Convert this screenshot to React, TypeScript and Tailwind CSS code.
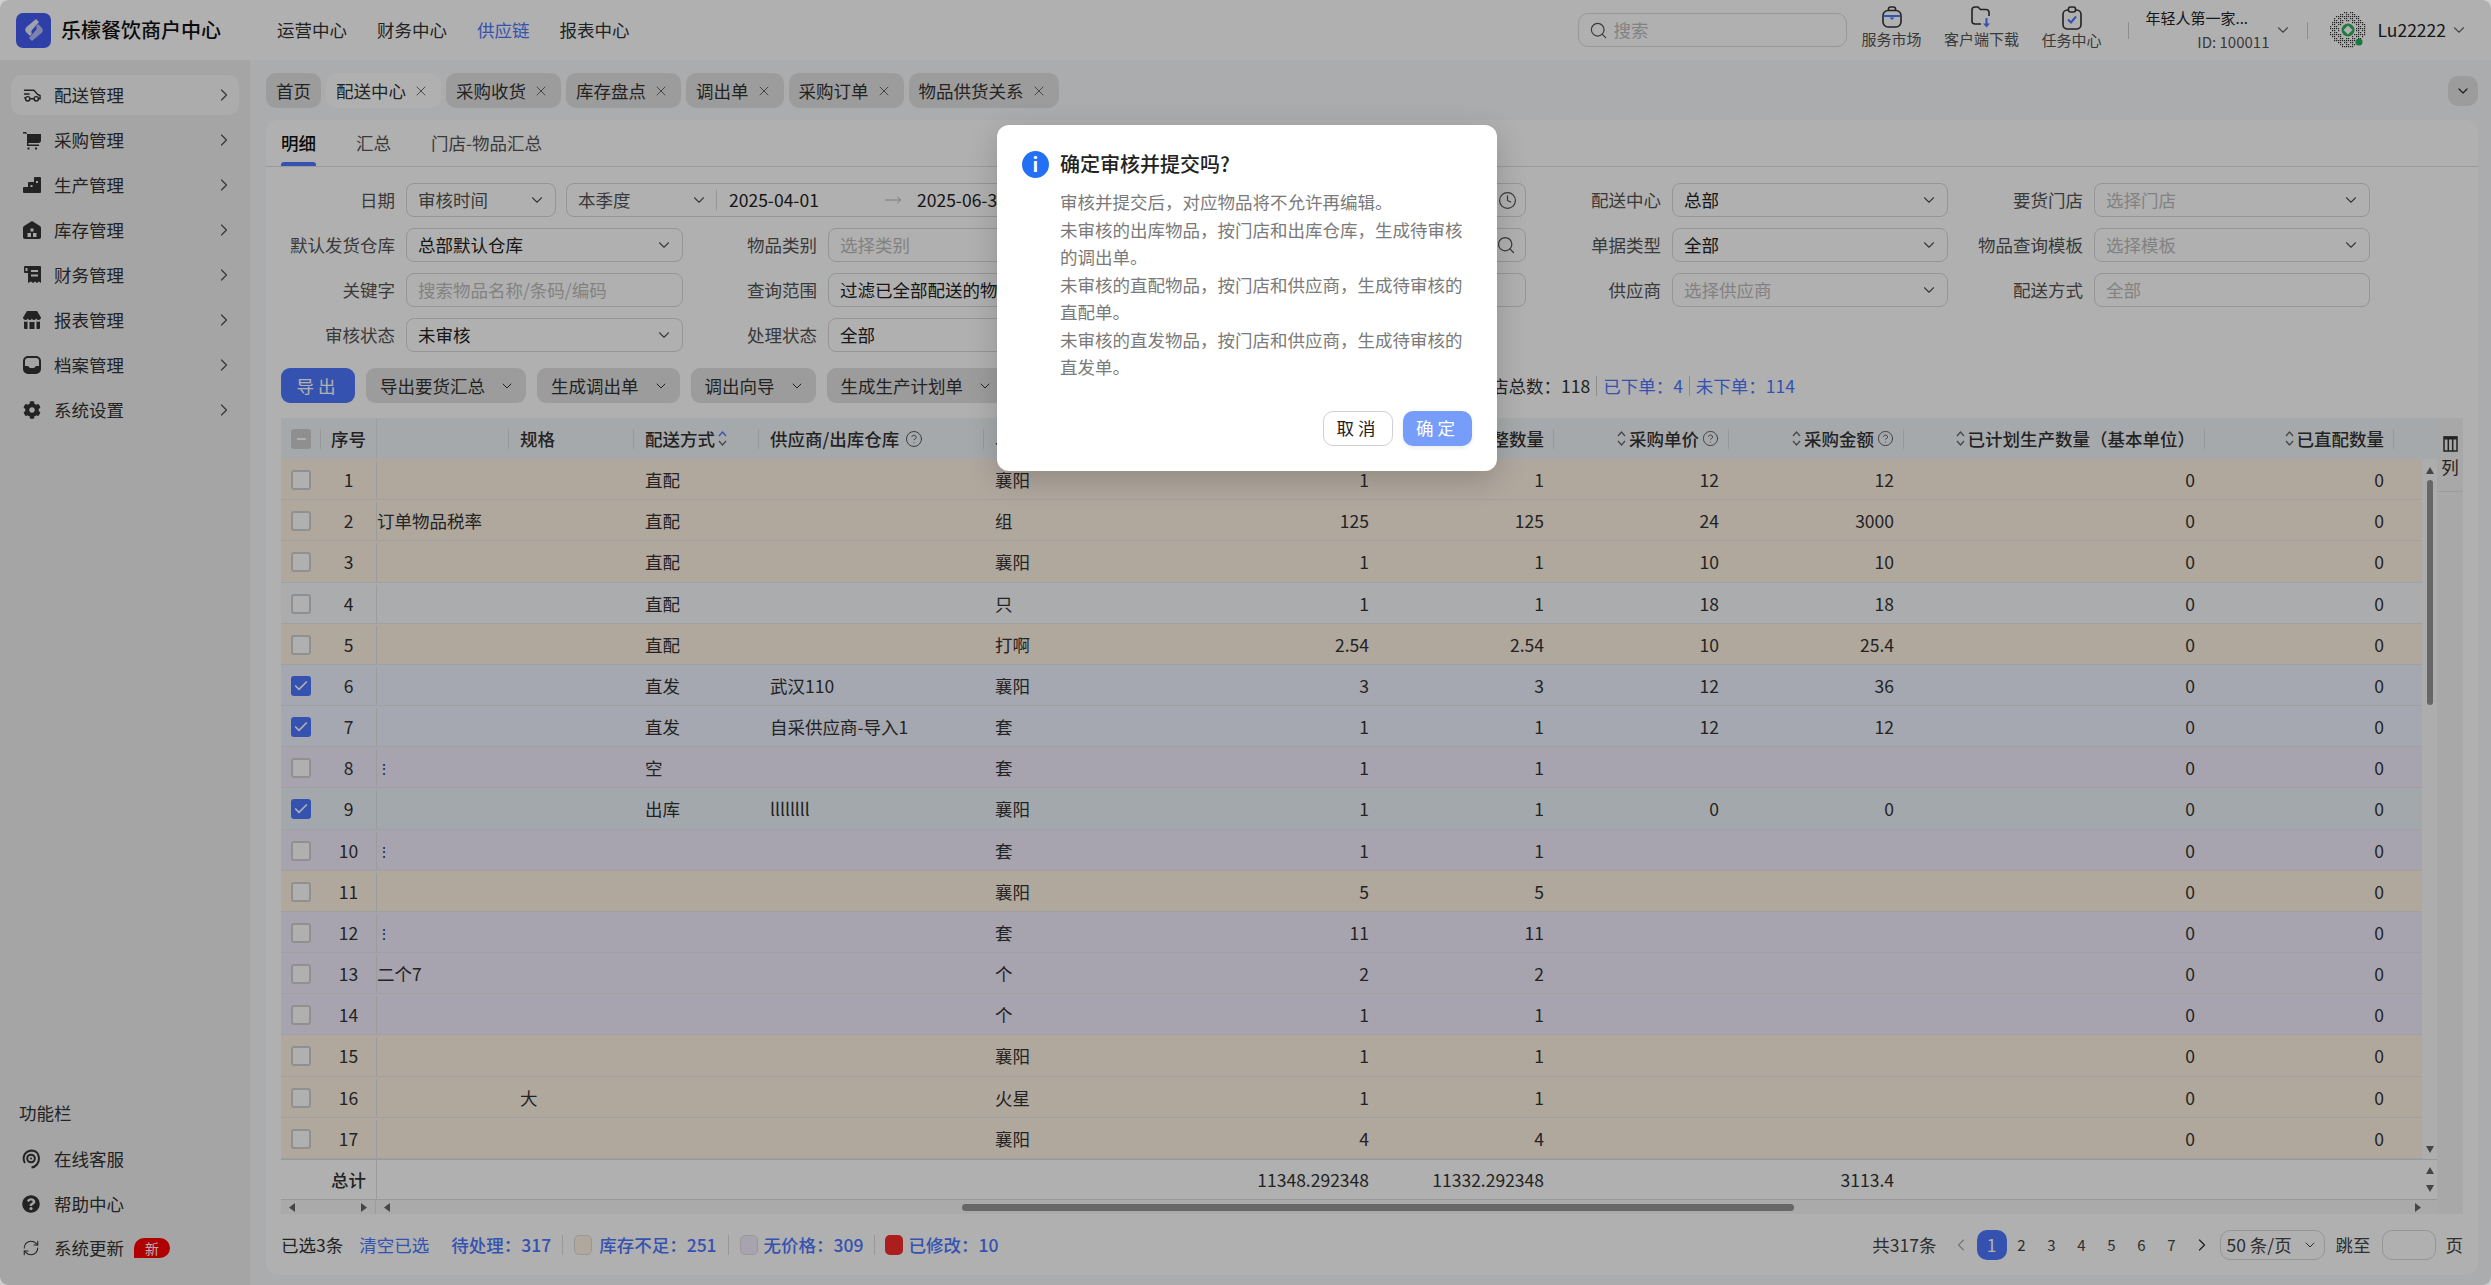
import { ChevronDown, ChevronRight, ChevronLeft, X, Search, Clock, CircleHelp, MoveRight, RefreshCw, Check } from 'lucide-react'
import { FaCog, FaQuestionCircle } from 'react-icons/fa'
import type { ReactNode } from 'react'

const GRID = 'grid grid-cols-[40px_55px_133px_125px_125px_225px_125px_270px_175px_175px_175px_301px_189px_1fr]'

type Row = {
  n: number
  tone: 'o' | 'w' | 'b' | 'p' | 'g'
  name?: string
  spec?: string
  way: string
  sup?: string
  unit: string
  a: string
  b: string
  p?: string
  m?: string
  checked?: boolean
}

const rows: Row[] = [
  { n: 1, tone: 'o', way: '直配', unit: '襄阳', a: '1', b: '1', p: '12', m: '12' },
  { n: 2, tone: 'o', name: '订单物品税率', way: '直配', unit: '组', a: '125', b: '125', p: '24', m: '3000' },
  { n: 3, tone: 'o', way: '直配', unit: '襄阳', a: '1', b: '1', p: '10', m: '10' },
  { n: 4, tone: 'w', way: '直配', unit: '只', a: '1', b: '1', p: '18', m: '18' },
  { n: 5, tone: 'o', way: '直配', unit: '打啊', a: '2.54', b: '2.54', p: '10', m: '25.4' },
  { n: 6, tone: 'b', way: '直发', sup: '武汉110', unit: '襄阳', a: '3', b: '3', p: '12', m: '36', checked: true },
  { n: 7, tone: 'b', way: '直发', sup: '自采供应商-导入1', unit: '套', a: '1', b: '1', p: '12', m: '12', checked: true },
  { n: 8, tone: 'p', name: '⋮', way: '空', unit: '套', a: '1', b: '1' },
  { n: 9, tone: 'g', way: '出库', sup: 'llllllll', unit: '襄阳', a: '1', b: '1', p: '0', m: '0', checked: true },
  { n: 10, tone: 'p', name: '⋮', way: '', unit: '套', a: '1', b: '1' },
  { n: 11, tone: 'o', way: '', unit: '襄阳', a: '5', b: '5' },
  { n: 12, tone: 'p', name: '⋮', way: '', unit: '套', a: '11', b: '11' },
  { n: 13, tone: 'p', name: '二个7', way: '', unit: '个', a: '2', b: '2' },
  { n: 14, tone: 'p', way: '', unit: '个', a: '1', b: '1' },
  { n: 15, tone: 'o', way: '', unit: '襄阳', a: '1', b: '1' },
  { n: 16, tone: 'o', spec: '大', way: '', unit: '火星', a: '1', b: '1' },
  { n: 17, tone: 'o', way: '', unit: '襄阳', a: '4', b: '4' },
]

const toneClass: Record<Row['tone'], string> = {
  o: 'bg-[#fff2e4]',
  w: 'bg-[#f8f9fb]',
  b: 'bg-[#eff4ff]',
  p: 'bg-[#f2eeff]',
  g: 'bg-[#edf3fa]',
}

function CarIcon() {
  return (
    <svg width="19" height="18" viewBox="0 0 19 18" fill="none" stroke="currentColor" strokeWidth="1.5">
      <path d="M1 4h10.5l4 4.5 2.5 1V13h-2" />
      <path d="M1 8h6M1 12h1.5" />
      <circle cx="5" cy="13" r="2.3" />
      <circle cx="14" cy="13" r="2.3" />
      <path d="M7.5 13h4" />
    </svg>
  )
}

function CartIcon() {
  return (
    <svg width="18" height="19" viewBox="0 0 18 19" fill="currentColor">
      <path d="M0 1h3l1 1.4V3h14v6.5c0 1.6-1 2.5-2.5 2.5H5.4v1.6H16V15H4V3L2.400 2.400H0z" />
      <rect x="4.500" y="16.500" width="2" height="2" />
      <rect x="12" y="16.500" width="2" height="2" />
    </svg>
  )
}

function StepsIcon() {
  return (
    <svg width="18" height="18" viewBox="0 0 18 18" fill="currentColor">
      <path d="M12 1h5a1 1 0 0 1 1 1v14a1 1 0 0 1-1 1H1a1 1 0 0 1-1-1v-4a1 1 0 0 1 1-1h4V7a1 1 0 0 1 1-1h5V2a1 1 0 0 1 1-1z" />
      <rect x="13" y="5" width="2" height="2" fill="#efefef" />
      <rect x="7.500" y="9" width="2" height="2" fill="#efefef" />
    </svg>
  )
}

function WarehouseIcon() {
  return (
    <svg width="18" height="18" viewBox="0 0 18 18" fill="currentColor">
      <path d="M9 0l8 5c.6.400 1 1 1 1.800V16a2 2 0 0 1-2 2H2a2 2 0 0 1-2-2V6.800C0 6 .4 5.400 1 5z" />
      <rect x="7.500" y="7.500" width="3" height="3" fill="#efefef" />
      <rect x="4.500" y="12" width="3.500" height="4" fill="#efefef" />
      <rect x="10" y="12" width="3.500" height="4" fill="#efefef" />
    </svg>
  )
}

function ReceiptIcon() {
  return (
    <svg width="17" height="18" viewBox="0 0 17 18" fill="currentColor">
      <path d="M1 0h15a1 1 0 0 1 1 1v16l-2-1.500L13 17l-2-1.500L9 17l-2-1.500L4 17V7H1a1 1 0 0 1-1-1V1a1 1 0 0 1 1-1z" />
      <rect x="7" y="4" width="7" height="2" fill="#efefef" />
      <rect x="7" y="8.500" width="7" height="2" fill="#efefef" />
      <rect x="1.500" y="2" width="2" height="3" fill="#efefef" />
    </svg>
  )
}

function StoreIcon() {
  return (
    <svg width="18" height="18" viewBox="0 0 18 18" fill="currentColor">
      <path d="M4 0h10l4 6.500c0 1.500-1.200 2.500-2.500 2.500-1 0-2-.6-2.300-1.500-.4.900-1.300 1.500-2.300 1.500S9 8.400 9 7.500C8.700 8.400 7.700 9 6.800 9s-1.800-.6-2-1.500C4.400 8.400 3.500 9 2.500 9 1.200 9 0 8 0 6.500z" />
      <path d="M1 10.500c1.400.5 2.600.3 3.500-.3V18H2a1 1 0 0 1-1-1zM17 10.500c-1.400.5-2.600.3-3.500-.3V18H16a1 1 0 0 0 1-1zM6.500 11h5v7h-5z" />
    </svg>
  )
}

function InboxIcon() {
  return (
    <svg width="18" height="18" viewBox="0 0 18 18" fill="none">
      <rect x="1" y="1" width="16" height="16" rx="4" stroke="currentColor" strokeWidth="2" />
      <path d="M1 10h4l2 2h4l2-2h4v3a4 4 0 0 1-4 4H5a4 4 0 0 1-4-4z" fill="currentColor" />
    </svg>
  )
}

function ServiceIcon() {
  return (
    <svg width="18" height="20" viewBox="0 0 18 20" fill="none" stroke="currentColor" strokeWidth="2">
      <path d="M3 14C0.500 10 1 3 9 1.500c6.500 0 8 5 8 8 0 4.500-3 8.500-7.500 9" />
      <circle cx="9" cy="9.500" r="3.800" />
      <circle cx="9" cy="9.500" r="1" fill="currentColor" stroke="none" />
    </svg>
  )
}

function Logo() {
  return (
    <div className="flex h-[35px] w-[35px] items-center justify-center rounded-[7px] bg-[#435ef3]">
      <svg width="20" height="24" viewBox="0 0 20 24">
        <path d="M12 1l3 3-7 8c-1 1.200-1 2.500 0 3.500l-2 2.500L2 14c-1-1.500-1-3 0-4.500z" fill="#e8ebfd" />
        <path d="M8 23l-3-3 7-8c1-1.200 1-2.500 0-3.500l2-2.500L18 10c1 1.500 1 3 0 4.500z" fill="#b5c0f8" />
      </svg>
    </div>
  )
}

function BagIcon() {
  return (
    <svg width="20" height="22" viewBox="0 0 20 22" fill="none">
      <path d="M6.500 4.500V3a2 2 0 0 1 2-2h3a2 2 0 0 1 2 2v1.500" stroke="#333" strokeWidth="1.600" />
      <rect x="1" y="4.500" width="18" height="16.500" rx="5" stroke="#333" strokeWidth="1.600" />
      <path d="M1.500 10h17" stroke="#4d78ff" strokeWidth="2" />
      <path d="M7.500 11.500h5l-2.500 2.500z" fill="#4d78ff" />
    </svg>
  )
}

function FolderIcon() {
  return (
    <svg width="21" height="22" viewBox="0 0 21 22" fill="none">
      <path d="M10 18H4a3 3 0 0 1-3-3V4a3 3 0 0 1 3-3h3l2.500 2.500H15a3 3 0 0 1 3 3V10" stroke="#333" strokeWidth="1.600" />
      <path d="M15.500 12v7" stroke="#4d78ff" strokeWidth="2" />
      <path d="M12 17.500h7L15.500 21.500z" fill="#4d78ff" />
    </svg>
  )
}

function ClipIcon() {
  return (
    <svg width="20" height="24" viewBox="0 0 20 24" fill="none">
      <rect x="1" y="4" width="18" height="19" rx="4.500" stroke="#333" strokeWidth="1.600" />
      <rect x="6.500" y="1" width="7" height="5" rx="2" stroke="#333" strokeWidth="1.600" fill="#fff" />
      <path d="M6 13.500l3 3 5-6" stroke="#4d78ff" strokeWidth="2" />
    </svg>
  )
}

function QrAvatar() {
  const dots: ReactNode[] = []
  for (let y = 0; y < 18; y++) {
    for (let x = 0; x < 18; x++) {
      const dx = x - 8.5
      const dy = y - 8.5
      const r = Math.sqrt(dx * dx + dy * dy)
      if (r > 9 || r < 4.200) continue
      if ((x * 7 + y * 13 + x * y) % 3 === 0) continue
      dots.push(<rect key={`${x}-${y}`} x={x * 2} y={y * 2} width="1.200" height="1.200" fill="#333" />)
    }
  }
  return (
    <svg width="36" height="36" viewBox="0 0 36 36">
      {dots}
      <circle cx="18" cy="18" r="6.500" fill="#2fae58" />
      <path d="M18 13.500l4.500 4.500-4.500 4.500-4.500-4.500z" fill="#fff" />
      <circle cx="29" cy="30" r="3.500" fill="#1fb359" />
    </svg>
  )
}

function Sort({ active }: { active?: boolean }) {
  return (
    <svg width="9" height="17" viewBox="0 0 9 17" fill="none" strokeWidth="1.300" className="shrink-0">
      <path d="M1 6l3.500-4L8 6" stroke={active ? '#4d78ff' : '#666'} />
      <path d="M1 11l3.500 4L8 11" stroke="#666" />
    </svg>
  )
}

function Arrow({ dir }: { dir: 'up' | 'down' | 'left' | 'right' }) {
  const points = {
    up: '4,1 8,8 0,8',
    down: '0,1 8,1 4,8',
    left: '7,0 7,9 1,4.500',
    right: '1,0 1,9 7,4.500',
  }[dir]
  return (
    <svg width="8" height="9" viewBox="0 0 8 9" className="shrink-0">
      <polygon points={points} fill="#666" />
    </svg>
  )
}

function Label({ children }: { children: ReactNode }) {
  return <div className="flex h-[34px] items-center justify-end pr-[11px] text-[#555]">{children}</div>
}

function Field({ children, value, placeholder, w, noArrow, icon }: { children?: ReactNode; value?: string; placeholder?: string; w?: string; noArrow?: boolean; icon?: ReactNode }) {
  return (
    <div className={`flex h-[34px] items-center rounded-[8px] border border-[#d9d9d9] bg-white pl-[11px] pr-[9px] ${w ?? ''}`}>
      {children}
      {value && <span className="text-[#222]">{value}</span>}
      {placeholder && <span className="text-[#bdbdbd]">{placeholder}</span>}
      <span className="ml-auto flex text-[#555]">{icon ?? (noArrow ? null : <ChevronDown size={18} strokeWidth={1.5} />)}</span>
    </div>
  )
}

function TagButton({ label }: { label: string }) {
  return (
    <div className="flex h-[35px] items-center gap-[14px] rounded-[9px] bg-[#e3e3e3] pl-[14px] pr-[11px] text-[#333]">
      {label}
      <ChevronDown size={16} strokeWidth={1.5} />
    </div>
  )
}

function CheckBox({ checked, half }: { checked?: boolean; half?: boolean }) {
  if (checked) {
    return (
      <div className="flex h-[20px] w-[20px] items-center justify-center rounded-[3px] bg-[#4d78ff] text-white">
        <Check size={16} strokeWidth={2.5} />
      </div>
    )
  }
  if (half) {
    return (
      <div className="flex h-[20px] w-[20px] items-center justify-center rounded-[3px] bg-[#cfcfcf]">
        <div className="h-[2px] w-[9px] bg-white" />
      </div>
    )
  }
  return <div className="h-[20px] w-[20px] rounded-[3px] border-2 border-[#d1d1d1] bg-white" />
}

function HeadCell({ children, right, sep = true, pl }: { children?: ReactNode; right?: boolean; sep?: boolean; pl?: string }) {
  return (
    <div className={`relative flex items-center gap-[3px] whitespace-nowrap ${right ? 'justify-end pr-[10px]' : pl ?? 'pl-[11px]'}`}>
      {children}
      {sep && <span className="absolute right-0 top-[11px] h-[20px] w-px bg-[#dcdcdc]" />}
    </div>
  )
}

function Num({ children }: { children?: ReactNode }) {
  return <div className="flex items-center justify-end pr-[10px]">{children}</div>
}

function Cell({ children }: { children?: ReactNode }) {
  return <div className="flex items-center pl-[11px]">{children}</div>
}

const menu = [
  { label: '配送管理', icon: <CarIcon />, active: true },
  { label: '采购管理', icon: <CartIcon /> },
  { label: '生产管理', icon: <StepsIcon /> },
  { label: '库存管理', icon: <WarehouseIcon /> },
  { label: '财务管理', icon: <ReceiptIcon /> },
  { label: '报表管理', icon: <StoreIcon /> },
  { label: '档案管理', icon: <InboxIcon /> },
  { label: '系统设置', icon: <FaCog size={18} /> },
]

const tabs = ['配送中心', '采购收货', '库存盘点', '调出单', '采购订单', '物品供货关系']

function Sidebar() {
  return (
    <aside className="flex w-[250px] shrink-0 flex-col bg-[#efefef] px-[11px] pb-[17px] pt-[15px] text-[#333]">
      <div className="flex flex-col gap-[5px]">
        {menu.map(m => (
          <div key={m.label} className={`flex h-[40px] items-center rounded-[10px] pl-[12px] pr-[5px] ${m.active ? 'bg-[#fafafa]' : ''}`}>
            <span className="flex w-[18px] justify-center">{m.icon}</span>
            <span className="ml-[13px]">{m.label}</span>
            <ChevronRight size={20} strokeWidth={1.5} className="ml-auto text-[#555]" />
          </div>
        ))}
      </div>
      <div className="mt-auto">
        <div className="flex h-[20px] items-center pl-[8px]">功能栏</div>
        <div className="mt-[16px] flex h-[40px] items-center pl-[11px]">
          <span className="flex w-[18px] justify-center"><ServiceIcon /></span>
          <span className="ml-[14px]">在线客服</span>
        </div>
        <div className="mt-[5px] flex h-[40px] items-center pl-[11px]">
          <span className="flex w-[18px] justify-center"><FaQuestionCircle size={18} /></span>
          <span className="ml-[14px]">帮助中心</span>
        </div>
        <div className="mt-[4px] flex h-[40px] items-center pl-[11px]">
          <span className="flex w-[18px] justify-center"><RefreshCw size={18} strokeWidth={1.4} /></span>
          <span className="ml-[14px]">系统更新</span>
          <span className="ml-[10px] flex h-[20px] w-[36px] items-center justify-center rounded-[10px] rounded-bl-none bg-[#ff0000] text-[14px] text-white">新</span>
        </div>
      </div>
    </aside>
  )
}

function TopBar() {
  return (
    <header className="flex h-[60px] shrink-0 items-center bg-white pl-[16px] pr-[23px] text-[#222]">
      <Logo />
      <div className="ml-[10px] text-[20px] font-medium text-[#111]">乐檬餐饮商户中心</div>
      <nav className="ml-[56px] flex gap-[30px] text-[#333]">
        <span>运营中心</span>
        <span>财务中心</span>
        <span className="text-[#4d78ff]">供应链</span>
        <span>报表中心</span>
      </nav>
      <div className="ml-auto flex h-[34px] w-[269px] items-center rounded-[10px] border border-[#dcdcdc] pl-[10px] text-[#bdbdbd]">
        <Search size={19} strokeWidth={1.5} className="text-[#555]" />
        <span className="ml-[6px]">搜索</span>
      </div>
      <div className="mb-[5px] flex text-[15px] leading-[20px] text-[#555]">
        <div className="flex w-[90px] flex-col items-center"><BagIcon /><span className="mt-[1px]">服务市场</span></div>
        <div className="flex w-[90px] flex-col items-center"><FolderIcon /><span className="mt-[1px]">客户端下载</span></div>
        <div className="flex w-[90px] flex-col items-center"><ClipIcon /><span>任务中心</span></div>
      </div>
      <div className="ml-[11px] h-[17px] w-px bg-[#ccc]" />
      <div className="ml-[17px] flex w-[124px] flex-col items-end">
        <span className="self-start text-[15px] leading-[24px]">年轻人第一家...</span>
        <span className="text-[15px] leading-[24px] text-[#555]">ID: 100011</span>
      </div>
      <ChevronDown size={18} strokeWidth={1.5} className="ml-[4px] text-[#666]" />
      <div className="ml-[15px] h-[17px] w-px bg-[#ccc]" />
      <div className="ml-[22px]"><QrAvatar /></div>
      <span className="ml-[12px] text-[#222]">Lu22222</span>
      <ChevronDown size={18} strokeWidth={1.5} className="ml-[4px] text-[#666]" />
    </header>
  )
}

function TabBar() {
  return (
    <div className="flex h-[35px] items-center gap-[5px] text-[#333]">
      <div className="flex h-[35px] items-center rounded-[10px] bg-[#e3e3e3] px-[10px]">首页</div>
      {tabs.map((t, i) => (
        <div key={t} className={`flex h-[35px] items-center gap-[7px] rounded-[10px] pl-[10px] pr-[12px] ${i === 0 ? 'bg-white' : 'bg-[#e3e3e3]'}`}>
          {t}
          <X size={16} strokeWidth={1.3} className="text-[#555]" />
        </div>
      ))}
      <div className="ml-auto flex h-[30px] w-[30px] items-center justify-center rounded-[10px] bg-[#e3e3e3]">
        <ChevronDown size={16} strokeWidth={2} />
      </div>
    </div>
  )
}

function Filters() {
  return (
    <div className="mt-[16px] grid grid-cols-[140px_277px_145px_698px_146px_276px_146px_276px] gap-y-[11px]">
      <Label>日期</Label>
      <div className="col-span-3 flex gap-[10px]">
        <Field w="w-[150px]"><span className="text-[#555]">审核时间</span></Field>
        <div className="flex h-[34px] flex-1 items-center rounded-[8px] border border-[#d9d9d9] bg-white pl-[11px] pr-[8px]">
          <span className="w-[112px] text-[#555]">本季度</span>
          <ChevronDown size={18} strokeWidth={1.5} className="text-[#555]" />
          <span className="ml-[8px] h-[20px] w-px bg-[#d9d9d9]" />
          <span className="ml-[12px] w-[155px] text-[#222]">2025-04-01</span>
          <MoveRight size={18} strokeWidth={1} className="text-[#999]" />
          <span className="ml-[15px] text-[#222]">2025-06-30</span>
          <Clock size={19} strokeWidth={1.5} className="ml-auto text-[#555]" />
        </div>
      </div>
      <Label>配送中心</Label>
      <Field value="总部" />
      <Label>要货门店</Label>
      <Field placeholder="选择门店" />

      <Label>默认发货仓库</Label>
      <Field value="总部默认仓库" />
      <Label>物品类别</Label>
      <Field placeholder="选择类别" icon={<Search size={20} strokeWidth={1.5} />} />
      <Label>单据类型</Label>
      <Field value="全部" />
      <Label>物品查询模板</Label>
      <Field placeholder="选择模板" />

      <Label>关键字</Label>
      <Field placeholder="搜索物品名称/条码/编码" noArrow />
      <Label>查询范围</Label>
      <Field value="过滤已全部配送的物品" noArrow />
      <Label>供应商</Label>
      <Field placeholder="选择供应商" />
      <Label>配送方式</Label>
      <Field placeholder="全部" noArrow />

      <Label>审核状态</Label>
      <Field value="未审核" />
      <Label>处理状态</Label>
      <Field value="全部" w="w-[277px]" />
    </div>
  )
}

function Toolbar() {
  return (
    <div className="ml-[15px] mt-[16px] flex h-[35px] w-[1514px] items-center justify-between">
      <div className="flex gap-[11px]">
        <div className="flex h-[35px] w-[74px] items-center justify-center rounded-[9px] bg-[#4d78ff] tracking-[4px] text-white">导出</div>
        <TagButton label="导出要货汇总" />
        <TagButton label="生成调出单" />
        <TagButton label="调出向导" />
        <TagButton label="生成生产计划单" />
      </div>
      <div className="flex items-center text-[#333]">
        <span>门店总数：118</span>
        <span className="mx-[6px] h-[20px] w-px bg-[#ccc]" />
        <span className="text-[#4d78ff]">已下单：4</span>
        <span className="mx-[6px] h-[20px] w-px bg-[#ccc]" />
        <span className="text-[#4d78ff]">未下单：114</span>
      </div>
    </div>
  )
}

function TableHead() {
  return (
    <div className={`${GRID} h-[41px] bg-[#f1f5f8] font-medium text-[#333]`}>
      <div className="relative flex items-center pl-[10px]">
        <CheckBox half />
        <span className="absolute right-0 top-[11px] h-[20px] w-px bg-[#dcdcdc]" />
      </div>
      <HeadCell pl="pl-[10px]" sep={false}>序号</HeadCell>
      <div className="relative border-l border-[#e6e6e6]"><span className="absolute right-0 top-[11px] h-[20px] w-px bg-[#dcdcdc]" /></div>
      <HeadCell>规格</HeadCell>
      <HeadCell>配送方式<Sort active /></HeadCell>
      <HeadCell>供应商/出库仓库<CircleHelp size={18} strokeWidth={1.3} className="ml-[3px] text-[#555]" /></HeadCell>
      <HeadCell>单位</HeadCell>
      <HeadCell right><Sort />要货数量</HeadCell>
      <HeadCell right><Sort />调整数量</HeadCell>
      <HeadCell right><Sort />采购单价<CircleHelp size={17} strokeWidth={1.3} className="text-[#555]" /></HeadCell>
      <HeadCell right><Sort />采购金额<CircleHelp size={17} strokeWidth={1.3} className="text-[#555]" /></HeadCell>
      <HeadCell right><Sort />已计划生产数量（基本单位）</HeadCell>
      <HeadCell right><Sort />已直配数量</HeadCell>
      <div />
    </div>
  )
}

function TableRow({ r }: { r: Row }) {
  const isDots = r.name === '⋮'
  return (
    <div className={`${GRID} h-[41.180px] border-b border-[#e8e8ec] pt-[2px] text-[#333] ${toneClass[r.tone]}`}>
      <div className="flex items-center pl-[10px]"><CheckBox checked={r.checked} /></div>
      <div className="flex items-center justify-center">{r.n}</div>
      <div className={`flex items-center border-l border-[#e3e3e3] whitespace-nowrap ${isDots ? 'text-[14px] pl-0' : ''}`}>{r.name}</div>
      <Cell>{r.spec}</Cell>
      <Cell>{r.way}</Cell>
      <Cell>{r.sup}</Cell>
      <Cell>{r.unit}</Cell>
      <Num>{r.a}</Num>
      <Num>{r.b}</Num>
      <Num>{r.p}</Num>
      <Num>{r.m}</Num>
      <Num>0</Num>
      <Num>0</Num>
      <div />
    </div>
  )
}

function DataTable() {
  return (
    <div className="ml-[15px] mr-[15px] mt-[15px] flex h-[796px]">
      <div className="flex min-w-0 flex-1 flex-col">
        <TableHead />
        <div className="flex h-[700px]">
          <div className="min-w-0 flex-1 overflow-hidden">
            {rows.map(r => <TableRow key={r.n} r={r} />)}
          </div>
          <div className="flex w-[15px] flex-col items-center bg-[#fbfbfb] pb-[5px] pt-[7px]">
            <Arrow dir="up" />
            <div className="mt-[5px] h-[225px] w-[6px] rounded-full bg-[#959595]" />
            <div className="mt-auto"><Arrow dir="down" /></div>
          </div>
        </div>
        <div className="flex h-[41px] border-b border-t border-[#dedede]">
          <div className={`${GRID} min-w-0 flex-1 text-[#333]`}>
            <div />
            <div className="flex items-center justify-center font-medium">总计</div>
            <div className="border-l border-[#e3e3e3]" />
            <div /><div /><div /><div />
            <Num>11348.292348</Num>
            <Num>11332.292348</Num>
            <Num />
            <Num>3113.4</Num>
            <Num /><Num />
            <div />
          </div>
          <div className="flex w-[15px] flex-col items-center justify-between py-[6px]">
            <Arrow dir="up" />
            <Arrow dir="down" />
          </div>
        </div>
        <div className="flex h-[14px] items-center bg-[#f7f7f7]">
          <div className="flex h-full w-[95px] items-center justify-between border-r border-[#e3e3e3] px-[7px]">
            <Arrow dir="left" />
            <Arrow dir="right" />
          </div>
          <div className="ml-[7px]"><Arrow dir="left" /></div>
          <div className="ml-[571px] h-[7px] w-[832px] rounded-full bg-[#959595]" />
          <div className="ml-[620px]"><Arrow dir="right" /></div>
        </div>
      </div>
      <div className="flex w-[26px] flex-col bg-[#f4f4f4] text-[#333]">
        <div className="flex h-[74px] flex-col items-center border-b border-[#e3e3e3] pt-[18px]">
          <svg width="15" height="16" viewBox="0 0 15 16" fill="none" stroke="#333" strokeWidth="1.500">
            <rect x="1" y="1" width="13" height="14" />
            <path d="M5.300 1v14M9.700 1v14" />
            <path d="M1 2h13" strokeWidth="3" />
          </svg>
          <span className="mt-[5px] leading-[20px]">列</span>
        </div>
      </div>
    </div>
  )
}

function Footer() {
  return (
    <div className="flex h-[61px] items-center justify-between pl-[15px] pr-[15px] text-[#333]">
      <div className="flex items-center">
        <span>已选3条</span>
        <span className="ml-[16px] text-[#4d78ff]">清空已选</span>
        <span className="ml-[22px] font-medium text-[#4d78ff]">待处理：317</span>
        <span className="ml-[11px] h-[20px] w-px bg-[#ddd]" />
        <span className="ml-[11px] h-[20px] w-[18px] rounded-[5px] border border-[#ddd] bg-[#fff2e4]" />
        <span className="ml-[7px] font-medium text-[#4d78ff]">库存不足：251</span>
        <span className="ml-[11px] h-[20px] w-px bg-[#ddd]" />
        <span className="ml-[11px] h-[20px] w-[18px] rounded-[5px] border border-[#ddd] bg-[#f2eeff]" />
        <span className="ml-[6px] font-medium text-[#4d78ff]">无价格：309</span>
        <span className="ml-[10px] h-[20px] w-px bg-[#ddd]" />
        <span className="ml-[10px] h-[20px] w-[18px] rounded-[5px] bg-[#fa2b2b]" />
        <span className="ml-[6px] font-medium text-[#4d78ff]">已修改：10</span>
      </div>
      <div className="flex items-center text-[#444]">
        <span>共317条</span>
        <ChevronLeft size={20} strokeWidth={1.3} className="ml-[14px] text-[#aaa]" />
        <span className="ml-[6px] flex h-[30px] w-[30px] items-center justify-center rounded-[10px] bg-[#4d78ff] text-white">1</span>
        {[2, 3, 4, 5, 6, 7].map(p => (
          <span key={p} className="flex w-[30px] justify-center text-[15px]">{p}</span>
        ))}
        <ChevronRight size={20} strokeWidth={1.5} className="ml-[5px] text-[#333]" />
        <div className="ml-[8px] flex h-[30px] w-[105px] items-center justify-between rounded-[10px] border border-[#d9d9d9] pl-[6px] pr-[6px]">
          <span className="whitespace-nowrap">50 条/页</span>
          <ChevronDown size={16} strokeWidth={1.5} />
        </div>
        <span className="ml-[11px]">跳至</span>
        <div className="ml-[11px] h-[30px] w-[54px] rounded-[10px] border border-[#d9d9d9]" />
        <span className="ml-[10px]">页</span>
      </div>
    </div>
  )
}

function ConfirmModal() {
  return (
    <div className="absolute left-[997px] top-[125px] z-50 w-[500px] rounded-[12px] bg-white p-[25px] shadow-[0_8px_30px_rgba(0,0,0,0.18)]">
      <div className="flex h-[28px] items-center">
        <div className="flex h-[27px] w-[27px] items-center justify-center rounded-full bg-[#2470f5] text-[19px] font-bold text-white">i</div>
        <div className="ml-[11px] text-[20px] font-medium text-[#222]">确定审核并提交吗?</div>
      </div>
      <div className="ml-[38px] mt-[10px] text-[17.500px] leading-[27.500px] text-[#7a7a7a]">
        <div>审核并提交后，对应物品将不允许再编辑。</div>
        <div>未审核的出库物品，按门店和出库仓库，生成待审核的调出单。</div>
        <div>未审核的直配物品，按门店和供应商，生成待审核的直配单。</div>
        <div>未审核的直发物品，按门店和供应商，生成待审核的直发单。</div>
      </div>
      <div className="mt-[30px] flex justify-end gap-[10px]">
        <button className="h-[35px] w-[70px] rounded-[10px] border border-[#d0d0d0] bg-white tracking-[4px] text-[#222]">取消</button>
        <button className="h-[35px] w-[69px] rounded-[10px] bg-[#769dfa] tracking-[4px] text-white shadow-[0_2px_4px_rgba(0,0,0,0.08)]">确定</button>
      </div>
    </div>
  )
}

export default function App() {
  return (
    <div className="relative h-[1285px] w-full overflow-hidden bg-[#d0d0d0] font-['Noto_Sans_CJK_SC',sans-serif] text-[17.500px] leading-[24px]">
      <div className="flex h-full flex-col overflow-hidden rounded-[8px] bg-[#f6f9fc]">
        <TopBar />
        <div className="flex min-h-0 flex-1">
          <Sidebar />
          <main className="flex min-w-0 flex-1 flex-col pb-[10px] pl-[16px] pr-[13px] pt-[13px]">
            <TabBar />
            <section className="mt-[12px] flex min-h-0 flex-1 flex-col rounded-[12px] bg-white">
              <div className="flex h-[47px] shrink-0 items-center gap-[40px] border-b border-[#dedede] pl-[15px] text-[#555]">
                <div className="relative flex h-full items-center font-medium text-[#111]">
                  明细
                  <span className="absolute bottom-0 left-0 h-[4px] w-full rounded-t-[3px] bg-[#4d78ff]" />
                </div>
                <span>汇总</span>
                <span>门店-物品汇总</span>
              </div>
              <Filters />
              <Toolbar />
              <DataTable />
              <Footer />
            </section>
          </main>
        </div>
      </div>
      <div className="absolute inset-0 z-40 rounded-[8px] bg-black/[0.31]" />
      <ConfirmModal />
    </div>
  )
}
